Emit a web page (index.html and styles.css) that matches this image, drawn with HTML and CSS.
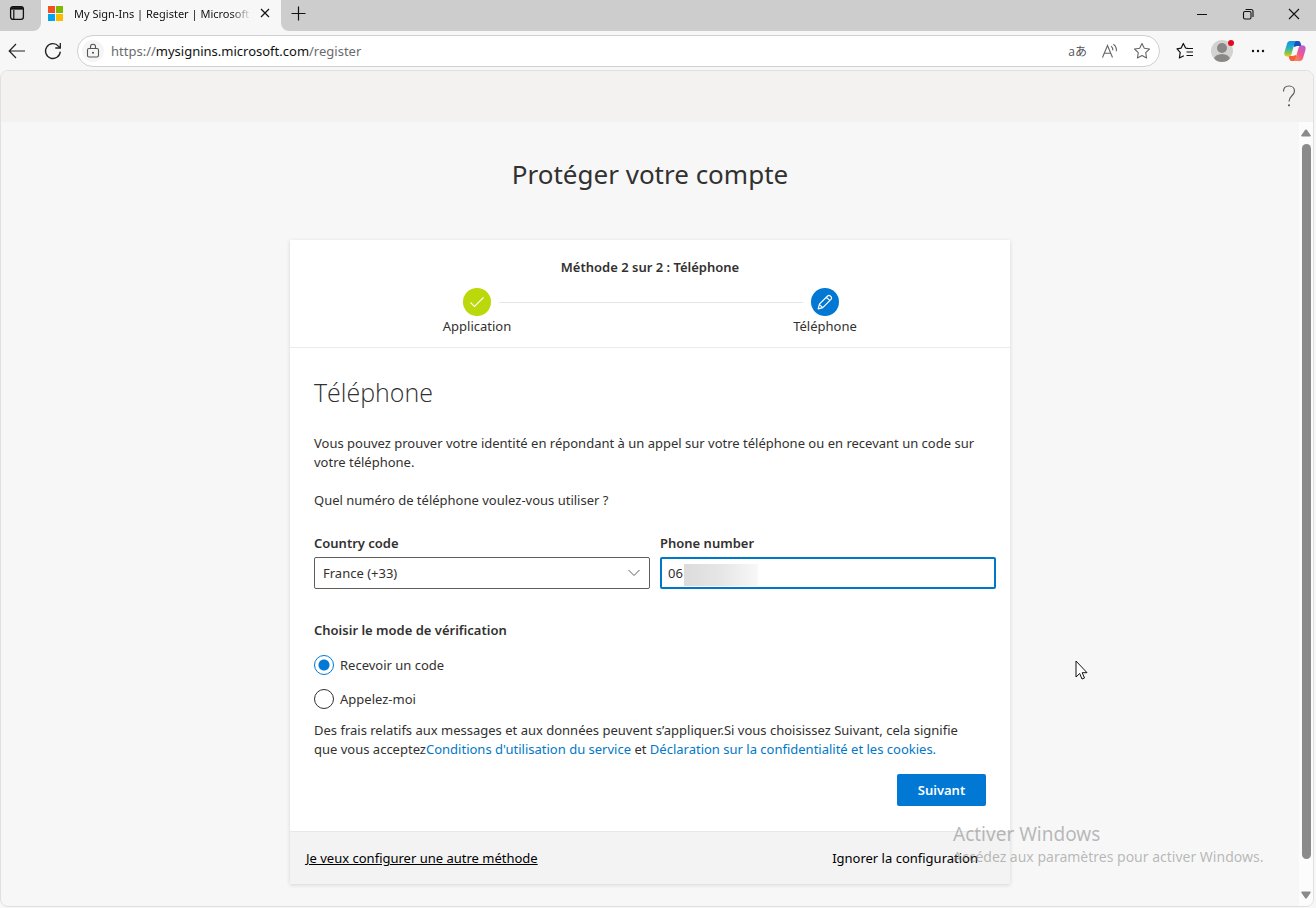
FILE: index.html
```html
<!DOCTYPE html>
<html lang="fr">
<head>
  <meta charset="UTF-8" />
  <meta name="viewport" content="width=device-width, initial-scale=1" />
  <title>My Sign-Ins | Register | Microsoft</title>
  <link rel="stylesheet" href="styles.css">
</head>
<body>
  <div class="tab-bar">
    <div class="tab-actions">
      <button class="icon-btn" aria-label="Tab actions">
        <svg width="16" height="16" viewBox="0 0 16 16" fill="none" stroke="#111" stroke-width="1.3"><rect x="1.6" y="1.6" width="12.8" height="12.8" rx="2.4"/><path d="M1.6 4h12.8M4.8 5v9.4" stroke-width="1.2"/><path d="M2.2 3.2h11.6" stroke-width="2.2"/></svg>
      </button>
    </div>
    <div class="tab">
      <svg width="15" height="15" viewBox="0 0 15 15"><path fill="#f25022" d="M0 0h7v7H0z"/><path fill="#7fba00" d="M8 0h7v7H8z"/><path fill="#00a4ef" d="M0 8h7v7H0z"/><path fill="#ffb900" d="M8 8h7v7H8z"/></svg>
      <span class="tab-title">My Sign-Ins | Register | Microsoft</span>
      <button class="icon-btn" aria-label="Close tab">
        <svg width="10" height="10" viewBox="0 0 10 10" stroke="#111" stroke-width="1.2"><path d="M1 1l8 8M9 1L1 9"/></svg>
      </button>
    </div>
    <div class="tab-rest">
      <button class="icon-btn" aria-label="New tab">
        <svg width="15" height="15" viewBox="0 0 15 15" stroke="#111" stroke-width="1.2"><path d="M7.5 .5v14M.5 7.5h14"/></svg>
      </button>
      <div class="window-buttons">
        <button class="icon-btn" aria-label="Minimize">
          <svg width="12" height="12" viewBox="0 0 12 12" stroke="#111"><path d="M1 6.5h10"/></svg>
        </button>
        <button class="icon-btn" aria-label="Restore">
          <svg width="12" height="12" viewBox="0 0 12 12" fill="none" stroke="#111" stroke-width="1.1"><rect x="1.5" y="3.5" width="7.5" height="7.5" rx="1.4"/><path d="M3.6 1.5H9A2 2 0 0 1 11 3.5V9"/></svg>
        </button>
        <button class="icon-btn" aria-label="Close">
          <svg width="12" height="12" viewBox="0 0 12 12" stroke="#111" stroke-width="1.1"><path d="M1 1l10 10M11 1L1 11"/></svg>
        </button>
      </div>
    </div>
  </div>

  <div class="toolbar">
    <button class="icon-btn nav" aria-label="Back">
      <svg width="18" height="18" viewBox="0 0 18 18" fill="none" stroke="#222" stroke-width="1.2"><path d="M17 9H1.5M8 2L1.2 9 8 16"/></svg>
    </button>
    <button class="icon-btn nav" aria-label="Refresh">
      <svg width="18" height="18" viewBox="0 0 18 18" fill="none" stroke="#222" stroke-width="1.3"><path d="M16.3 9.6A7.4 7.4 0 1 1 14.6 4.3L16 5.8"/><path d="M16.3 1v5h-5"/></svg>
    </button>
    <div class="address-bar">
      <span class="lock">
        <svg width="14" height="16" viewBox="0 0 14 16" fill="none" stroke="#555" stroke-width="1.1"><rect x="1.5" y="5.5" width="11" height="8.5" rx="1.6"/><path d="M4.5 5.5V3.8a2.5 2.5 0 0 1 5 0V5.5"/><circle cx="7" cy="9.8" r=".5" fill="#555"/></svg>
      </span>
      <span class="url">https://<b>mysignins.microsoft.com</b>/register</span>
      <button class="icon-btn translate" aria-label="Translate">aあ</button>
      <button class="icon-btn" aria-label="Read aloud">
        <svg width="18" height="16" viewBox="0 0 18 16" fill="none" stroke="#666" stroke-width="1.1"><path d="M1.5 14.5L6.5 2.5l5 12M3.3 10.2h6.4"/><path d="M10.2 3.2q1.800 1.600 1.600 4.200M12.400 1.200q3.400 2.400 3 7"/></svg>
      </button>
      <button class="icon-btn" aria-label="Add to favorites">
        <svg width="18" height="18" viewBox="0 0 18 18" fill="none" stroke="#666" stroke-width="1.1" stroke-linejoin="round"><path d="M9 1.5l2.3 4.8 5.2.7-3.8 3.7.9 5.3L9 13.5 4.4 16l.9-5.3L1.5 7l5.2-.7z"/></svg>
      </button>
    </div>
    <button class="icon-btn" aria-label="Favorites">
      <svg width="18" height="18" viewBox="0 0 18 18" fill="none" stroke="#111" stroke-width="1.2" stroke-linejoin="round"><path d="M11.8 6.3L9.6 6 7.3 1.5 5.2 6.1 1 6.8l3.2 3.5-.8 5.7 4.4-2.3"/><path d="M10.5 6.5H17M10.5 10H17M10.5 13.5H17"/></svg>
    </button>
    <button class="icon-btn" aria-label="Profile">
      <svg width="24" height="24" viewBox="0 0 24 24"><defs><clipPath id="face"><circle cx="12" cy="12" r="11"/></clipPath></defs><circle cx="12" cy="12" r="11" fill="#d4d2d0"/><g clip-path="url(#face)" fill="#8a8886"><circle cx="12" cy="9" r="5"/><ellipse cx="12" cy="20.5" rx="8" ry="5.5"/></g><circle cx="21" cy="4" r="3" fill="#e00b1c"/></svg>
    </button>
    <button class="icon-btn" aria-label="Settings and more">
      <svg width="16" height="4" viewBox="0 0 16 4" fill="#111"><circle cx="3" cy="2" r="1.2"/><circle cx="8" cy="2" r="1.2"/><circle cx="13" cy="2" r="1.2"/></svg>
    </button>
    <button class="icon-btn copilot" aria-label="Copilot">
      <svg width="22" height="22" viewBox="0 0 22 22">
        <defs>
          <linearGradient id="cool" x1="0" y1="0" x2="0" y2="1"><stop offset="0" stop-color="#1a8fe3"/><stop offset=".45" stop-color="#25b3c4"/><stop offset=".75" stop-color="#7fc64b"/><stop offset="1" stop-color="#f5c518"/></linearGradient>
          <linearGradient id="warm" x1="1" y1="0" x2="0" y2="1"><stop offset="0" stop-color="#b05be8"/><stop offset=".5" stop-color="#f0568c"/><stop offset="1" stop-color="#ff9640"/></linearGradient>
        </defs>
        <path fill="#1b4fc0" d="M9 1h5.2c1.400 0 2 .8 2.400 2l.9 3H13L10 7z"/>
        <path fill="#f4603a" d="M13 21H7.800c-1.400 0-2-.8-2.400-2l-.9-3H9l3-1z"/>
        <path fill="url(#cool)" d="M6.200 1h6.300c-1.200.4-1.700 1.700-2.100 3L7.600 13.500c-.5 1.900-1.200 2.900-2.900 2.900H3C.4 16.400 0 14 .6 11.800L3 3.800C3.600 2 4.500 1 6.200 1z"/>
        <path fill="url(#warm)" d="M15.800 21H9.500c1.200-.4 1.700-1.700 2.100-3l2.800-9.500c.5-1.900 1.200-2.900 2.900-2.900H19c2.600 0 3 2.400 2.400 4.600L19 18.200c-.6 1.800-1.500 2.800-3.200 2.800z"/>
      </svg>
    </button>
  </div>

  <div class="page">
    <header class="page-header">
      <button class="icon-btn" aria-label="Aide">
        <svg width="16" height="24" viewBox="0 0 16 24" fill="none" stroke="#605e5c" stroke-width="1.2"><path d="M2.5 7.5C2.5 4 4.8 2 8 2s5.5 2 5.500 5c0 2.500-1.500 3.800-3 5.200C9 13.600 8 14.700 8 17.500"/><circle cx="8" cy="21.300" r=".5" fill="#605e5c"/></svg>
      </button>
    </header>

    <div class="viewport">
      <main class="content">
        <h1>Protéger votre compte</h1>

        <form class="card">
          <div class="steps">
            <p class="steps-title">Méthode 2 sur 2 : Téléphone</p>
            <div class="steps-row">
              <div class="step">
                <span class="step-icon done">
                  <svg width="16" height="16" viewBox="0 0 16 16" fill="none" stroke="#fff" stroke-width="1.1"><path d="M1.5 8.500l4 4 9-9"/></svg>
                </span>
                <span>Application</span>
              </div>
              <div class="step-line"></div>
              <div class="step">
                <span class="step-icon current">
                  <svg width="16" height="16" viewBox="0 0 16 16" fill="none" stroke="#fff" stroke-width="1.2" stroke-linejoin="round"><path d="M1.2 14.8l1.2-4.6 8.2-8.200a1.900 1.900 0 0 1 2.700 0l.7.7a1.900 1.900 0 0 1 0 2.700l-8.200 8.200zM9.400 3.200l3.400 3.400M2.600 10.600l2.800 2.800"/></svg>
                </span>
                <span>Téléphone</span>
              </div>
            </div>
          </div>

          <div class="card-body">
            <h2>Téléphone</h2>
            <p>Vous pouvez prouver votre identité en répondant à un appel sur votre téléphone ou en recevant un code sur votre téléphone.</p>
            <p class="question">Quel numéro de téléphone voulez-vous utiliser ?</p>

            <div class="fields">
              <div class="field">
                <label for="country">Country code</label>
                <select id="country">
                  <option>France (+33)</option>
                </select>
                <svg class="chevron" width="14" height="8" viewBox="0 0 14 8" fill="none" stroke="#605e5c"><path d="M1.5 1L7 6.5 12.5 1"/></svg>
              </div>
              <div class="field">
                <label for="phone">Phone number</label>
                <input type="tel" id="phone" value="06">
                <span class="masked"></span>
              </div>
            </div>

            <fieldset>
              <legend>Choisir le mode de vérification</legend>
              <label class="choice"><input type="radio" name="mode" checked>Recevoir un code</label>
              <label class="choice"><input type="radio" name="mode">Appelez-moi</label>
            </fieldset>

            <p class="terms">Des frais relatifs aux messages et aux données peuvent s’appliquer.Si vous choisissez Suivant, cela signifie que vous acceptez<a href="#">Conditions d'utilisation du service</a> et <a href="#">Déclaration sur la confidentialité et les cookies.</a></p>

            <div class="actions">
              <button type="button" class="primary">Suivant</button>
            </div>
          </div>

          <div class="card-footer">
            <a href="#" class="other">Je veux configurer une autre méthode</a>
            <a href="#">Ignorer la configuration</a>
          </div>
        </form>
      </main>

      <div class="scrollbar">
        <svg width="10" height="8" viewBox="0 0 10 8" fill="#8a8a8a"><path d="M4.2.8L.4 6.2Q0 7.500 1.200 7.500h7.600Q10 7.500 9.600 6.200L5.800.8Q5 0 4.200.8z"/></svg>
        <div class="thumb"></div>
        <svg width="10" height="8" viewBox="0 0 10 8" fill="#8a8a8a"><path d="M4.2 7.200L.4 1.800Q0 .5 1.200.5h7.600Q10 .5 9.600 1.800L5.800 7.200Q5 8 4.200 7.200z"/></svg>
      </div>
    </div>
  </div>

  <div class="watermark">
    <div class="watermark-title">Activer Windows</div>
    <div>Accédez aux paramètres pour activer Windows.</div>
  </div>

  <svg class="cursor" width="13" height="20" viewBox="0 0 13 20" fill="#fff" stroke="#111"><path d="M1 1v16l3.7-3.500L7 19l2.500-1-2.300-5.300H12z"/></svg>
</body>
</html>
```
FILE: styles.css
```css
* {
  box-sizing: border-box;
}

body {
  font-family: 'Noto Sans', 'Open Sans', sans-serif;
  font-size: 13px;
  line-height: 19px;
  color: #323130;
  background: #f7f7f7;
  margin: 0;
  height: 100vh;
  display: flex;
  flex-direction: column;
  overflow: hidden;
  position: relative;
}

h1, h2, p {
  margin: 0;
}

a {
  color: #0078c8;
  text-decoration: none;
}

svg {
  display: block;
  flex: none;
}

.icon-btn {
  display: flex;
  align-items: center;
  justify-content: center;
  padding: 0;
  border: none;
  background: none;
  flex: none;
}

/* browser tabs */
.tab-bar {
  display: flex;
  height: 31px;
  flex: none;
}

.tab-actions {
  width: 41px;
  background: #cdcdcd;
  border-bottom-right-radius: 8px;
  display: flex;
  padding: 0 0 5px 9px;
}

.tab {
  width: 240px;
  display: flex;
  align-items: center;
  padding: 0 11px 5px 7px;
}

.tab-title {
  flex: 1;
  margin: 0 8px 0 11px;
  font-size: 11px;
  color: #111;
  white-space: nowrap;
  mask-image: linear-gradient(to right, #000 88%, transparent);
}

.tab-rest {
  flex: 1;
  display: flex;
  justify-content: space-between;
  padding: 0 16px 4px 10px;
  background: #cdcdcd;
  border-bottom-left-radius: 8px;
}

.window-buttons {
  display: flex;
  gap: 34px;
}

/* address row */
.toolbar {
  display: flex;
  align-items: center;
  gap: 16px;
  height: 39px;
  flex: none;
  padding: 1px 10px 0 7px;
}

.nav {
  width: 20px;
}

.copilot {
  margin-left: 2px;
}

.address-bar {
  flex: 1;
  display: flex;
  align-items: center;
  gap: 14px;
  height: 32px;
  margin-left: -2px;
  padding: 0 8px 0 4px;
  border: 1px solid #d0d0d0;
  border-radius: 16px;
  background: #fff;
}

.lock {
  display: flex;
  align-items: center;
  justify-content: center;
  width: 22px;
  height: 22px;
  margin-right: -7px;
  border-radius: 50%;
  background: #f5f5f5;
}

.url {
  flex: 1;
  color: #6b6b6b;
}

.url b {
  font-weight: 400;
  color: #111;
}

.translate {
  font-family: 'Open Sans', 'Noto Sans CJK JP', sans-serif;
  font-size: 12px;
  color: #555;
}

/* page */
.page {
  flex: 1;
  display: flex;
  flex-direction: column;
  min-height: 0;
  margin: 0 2px 1px 0;
  border: 1px solid #e0e0e0;
  border-radius: 8px;
  overflow: hidden;
}

.page-header {
  display: flex;
  justify-content: flex-end;
  flex: none;
  height: 51px;
  padding: 0 16px 2px 0;
  background: #f3f2f1;
}

.viewport {
  flex: 1;
  display: flex;
  min-height: 0;
}

.content {
  flex: 1;
  padding: 32px 16px 22px;
  overflow: hidden;
}

h1 {
  font-size: 26px;
  line-height: 40px;
  font-weight: 400;
  text-align: center;
}

.card {
  max-width: 720px;
  margin: 46px auto 0;
  background: #fff;
  box-shadow: 0 1px 4px rgba(0, 0, 0, 0.14);
}

.steps {
  padding: 18px 24px 11px;
  border-bottom: 1px solid #edebe9;
}

.steps-title {
  font-weight: 600;
  text-align: center;
}

.steps-row {
  display: flex;
  justify-content: center;
  margin-top: 11px;
  padding-left: 2px;
}

.step {
  width: 72px;
  display: flex;
  flex-direction: column;
  align-items: center;
  gap: 1px;
}

.step-icon {
  width: 28px;
  height: 28px;
  border-radius: 50%;
  display: flex;
  align-items: center;
  justify-content: center;
}

.done {
  background: #bad80a;
}

.current {
  background: #0078d4;
}

.step-line {
  width: 304px;
  margin: 14px -14px 0;
  border-top: 1px solid #e5e5e5;
}

.card-body {
  padding: 24px 14px 25px 24px;
}

h2 {
  font-family: 'Open Sans', sans-serif;
  font-size: 25px;
  line-height: 40px;
  font-weight: 300;
  margin-bottom: 22px;
}

.question {
  margin: 19px 0 24px;
}

.fields {
  display: grid;
  grid-template-columns: 1fr 1fr;
  gap: 10px;
}

.field {
  position: relative;
  display: flex;
  flex-direction: column;
  gap: 4px;
}

.field label, legend {
  font-weight: 600;
}

select, input[type="tel"] {
  width: 100%;
  height: 32px;
  padding: 0 8px;
  border: 1px solid #605e5c;
  border-radius: 2px;
  background: #fff;
  color: #323130;
  font: inherit;
  appearance: none;
}

input[type="tel"] {
  padding: 0 6px;
  border: 2px solid #0078c8;
  outline: none;
}

.chevron {
  position: absolute;
  right: 9px;
  bottom: 12px;
  pointer-events: none;
}

/* hides the rest of the number */
.masked {
  position: absolute;
  left: 24px;
  bottom: 3px;
  width: 74px;
  height: 22px;
  background: linear-gradient(to right, #dcdcdc, #e6e6e6 50%, #f8f8f8);
}

fieldset {
  margin: 32px 0 0;
  padding: 0;
  border: none;
}

legend {
  padding: 0;
  margin-bottom: 15px;
}

.choice {
  display: flex;
  align-items: center;
  gap: 6px;
  height: 20px;
  margin-bottom: 14px;
}

.choice input {
  appearance: none;
  width: 20px;
  height: 20px;
  margin: 0;
  border: 1px solid #323130;
  border-radius: 50%;
}

.choice input:checked {
  border-color: #0078d4;
  background: radial-gradient(#0078d4 5px, transparent 6px);
}

.terms {
  margin-top: -2px;
  padding-right: 24px;
}

.actions {
  display: flex;
  justify-content: flex-end;
  padding: 15px 10px 0;
}

.primary {
  min-width: 89px;
  height: 32px;
  border: none;
  border-radius: 2px;
  background: #0078d4;
  color: #fff;
  font: inherit;
  font-weight: 600;
}

.card-footer {
  display: flex;
  justify-content: space-between;
  padding: 17px 32px 16px 16px;
  border-top: 1px solid #e8e8e8;
  background: #f3f3f3;
}

.card-footer a {
  color: #000;
}

.card-footer .other {
  text-decoration: underline;
}

.scrollbar {
  width: 14px;
  display: flex;
  flex-direction: column;
  align-items: center;
  padding: 7px 0;
  background: #fcfcfc;
}

.thumb {
  flex: 1;
  width: 9px;
  margin: 7px 0 32px;
  border-radius: 5px;
  background: #8b8b8b;
}

.watermark {
  position: absolute;
  right: 50px;
  bottom: 40px;
  width: 313px;
  color: rgba(120, 120, 120, 0.5);
  font-size: 14px;
  line-height: 22px;
  white-space: nowrap;
}

.watermark-title {
  font-size: 19px;
  line-height: 24px;
}

.cursor {
  position: absolute;
  left: 1075px;
  top: 660px;
}
```
